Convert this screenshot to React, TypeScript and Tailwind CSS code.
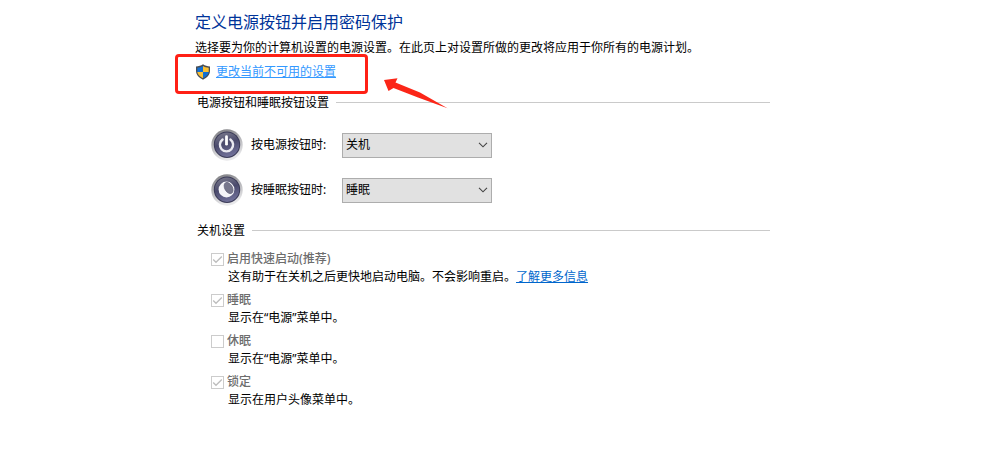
import { useId, useState } from "react";
import type { ReactNode } from "react";

function ShieldIcon() {
  return (
    <svg className="h-4 w-4 shrink-0" viewBox="0 0 16 16" aria-hidden="true">
      <path d="M8 .3C6 1.7 3.7 2.4 1 2.5v4.3c0 4 2.8 6.8 7 8.9 4.200-2.100 7-4.900 7-8.900V2.500C12.300 2.400 10 1.700 8 .3Z" fill="#4a4d52" />
      <path d="M8 1.900v6.100H2.300V3.700C4.500 3.500 6.300 3 8 1.900Z" fill="#1270d4" />
      <path d="M8 1.900v6.100h5.700V3.700C11.500 3.500 9.700 3 8 1.900Z" fill="#fcc133" />
      <path d="M2.300 8H8v6.200C4.900 12.600 2.700 10.700 2.300 8Z" fill="#fcc133" />
      <path d="M13.700 8H8v6.200c3.100-1.600 5.300-3.500 5.700-6.200Z" fill="#1270d4" />
    </svg>
  );
}

function RoundButtonIcon({ children }: { children: ReactNode }) {
  const id = useId();
  return (
    <svg className="h-8 w-8 shrink-0" viewBox="0 0 32 32" aria-hidden="true">
      <defs>
        <linearGradient id={`${id}rim`} x1="0" y1="0" x2="0.3" y2="1">
          <stop offset="0" stopColor="#77777b" />
          <stop offset="0.5" stopColor="#b4b4b8" />
          <stop offset="1" stopColor="#e8e8ea" />
        </linearGradient>
        <linearGradient id={`${id}face`} x1="0.3" y1="0" x2="0.6" y2="1">
          <stop offset="0" stopColor="#77778a" />
          <stop offset="0.45" stopColor="#4a4a6c" />
          <stop offset="1" stopColor="#73739c" />
        </linearGradient>
      </defs>
      <circle cx="16" cy="16" r="15.7" fill={`url(#${id}rim)`} />
      <circle cx="16" cy="15.7" r="13.2" fill="#3b3b58" />
      <circle cx="16" cy="15.7" r="12.2" fill={`url(#${id}face)`} />
      {children}
    </svg>
  );
}

function PowerIcon() {
  return (
    <RoundButtonIcon>
      <path d="M11.600 10.500a6.600 6.600 0 1 0 7.800 0" fill="none" stroke="#e9e9f0" strokeWidth="2.400" strokeLinecap="round" />
      <path d="M15.500 7.700v7.500" stroke="#fff" strokeWidth="2.800" strokeLinecap="round" />
    </RoundButtonIcon>
  );
}

function SleepIcon() {
  return (
    <RoundButtonIcon>
      <circle cx="15.500" cy="15.500" r="7.900" fill="#f6f6f9" />
      <ellipse cx="17.600" cy="14" rx="3.800" ry="6.100" transform="rotate(-30 17.600 14)" fill="#77778c" stroke="#5f5f78" strokeWidth="0.600" />
    </RoundButtonIcon>
  );
}

function SectionHeading({ children }: { children: string }) {
  return (
    <div className="flex items-center gap-[7px] pl-0.5">
      <h2>{children}</h2>
      <div className="mb-0.5 h-px flex-1 bg-[#cacaca]" />
    </div>
  );
}

const actions = ["不采取任何操作", "睡眠", "休眠", "关机", "关闭显示器"];

function ActionRow({ icon, label, initial }: { icon: ReactNode; label: string; initial: string }) {
  const id = useId();
  const [value, setValue] = useState(initial);
  return (
    <div className="flex items-center pl-4">
      {icon}
      <label htmlFor={id} className="ml-2 w-[91px]">{label}</label>
      <div className="grid w-[150px] items-center">
        <select
          id={id}
          value={value}
          onChange={(e) => setValue(e.target.value)}
          className="col-start-1 row-start-1 h-[25px] w-full appearance-none border border-[#adadad] bg-[#e1e1e1] pr-6 pl-[3px]"
        >
          {actions.map((a) => (
            <option key={a}>{a}</option>
          ))}
        </select>
        <svg className="pointer-events-none col-start-1 row-start-1 mr-1 h-[6px] w-[10px] justify-self-end" viewBox="0 0 10 6" aria-hidden="true">
          <path d="M1 .8 5 4.800 9 .8" fill="none" stroke="#444" strokeWidth="1.100" />
        </svg>
      </div>
    </div>
  );
}

function ShutdownOption({ label, checked, children }: { label: string; checked: boolean; children: ReactNode }) {
  const id = useId();
  return (
    <div>
      <div className="flex items-center gap-[3px]">
        <div className="grid h-[13px] w-[13px] place-items-center">
          <input
            id={id}
            type="checkbox"
            defaultChecked={checked}
            disabled
            className="peer col-start-1 row-start-1 h-[13px] w-[13px] appearance-none border border-[#cccccc] bg-white"
          />
          <svg className="pointer-events-none col-start-1 row-start-1 hidden h-[11px] w-[11px] peer-checked:block" viewBox="0 0 11 11" aria-hidden="true">
            <path d="m1.200 5.500 2.800 2.800L9.800 2.500" fill="none" stroke="#bdbdbd" strokeWidth="1.300" />
          </svg>
        </div>
        <label htmlFor={id} className="font-medium text-[#6d6d6d]">{label}</label>
      </div>
      <p className="pl-[17px]">{children}</p>
    </div>
  );
}

export default function App() {
  return (
    <main className="min-h-screen bg-white pt-[10px] pr-4 pl-[195px] font-['Noto_Sans','Noto_Sans_CJK_SC',sans-serif] text-[12px] leading-[18px] text-black">
      <div className="max-w-[575px]">
        <h1 className="text-[16px] leading-6 text-[#003399]">定义电源按钮并启用密码保护</h1>
        <p className="mt-[5px]">选择要为你的计算机设置的电源设置。在此页上对设置所做的更改将应用于你所有的电源计划。</p>

        <div className="relative mt-[6px] flex items-center gap-[5px]">
          <ShieldIcon />
          <a href="#settings" className="text-[#3399ff] underline">更改当前不可用的设置</a>
          <div className="pointer-events-none absolute -top-[9px] -left-5 h-10 w-[193px] rounded-[4px] border-3 border-[#ff2015]" />
          <svg className="pointer-events-none absolute top-[15px] left-[189px] h-[31px] w-[64px]" viewBox="0 0 64 31" aria-hidden="true">
            <path d="M0 2 13.500 .3 11.500 4.500 36 14.500 63.500 30.300 34 19.500 9.500 10 4.500 13Z" fill="#fb2618" />
          </svg>
        </div>

        <section id="settings" className="mt-[13px]">
          <SectionHeading>电源按钮和睡眠按钮设置</SectionHeading>
          <div className="mt-[17px] flex flex-col gap-[13px]">
            <ActionRow icon={<PowerIcon />} label="按电源按钮时:" initial="关机" />
            <ActionRow icon={<SleepIcon />} label="按睡眠按钮时:" initial="睡眠" />
          </div>
        </section>

        <section className="mt-4">
          <SectionHeading>关机设置</SectionHeading>
          <div className="mt-[10px] flex flex-col gap-[5px] pl-4">
            <ShutdownOption label="启用快速启动(推荐)" checked>
              这有助于在关机之后更快地启动电脑。不会影响重启。
              <a href="#learn-more" className="text-[#0066cc] underline">了解更多信息</a>
            </ShutdownOption>
            <ShutdownOption label="睡眠" checked>显示在“电源”菜单中。</ShutdownOption>
            <ShutdownOption label="休眠" checked={false}>显示在“电源”菜单中。</ShutdownOption>
            <ShutdownOption label="锁定" checked>显示在用户头像菜单中。</ShutdownOption>
          </div>
        </section>
      </div>
    </main>
  );
}
